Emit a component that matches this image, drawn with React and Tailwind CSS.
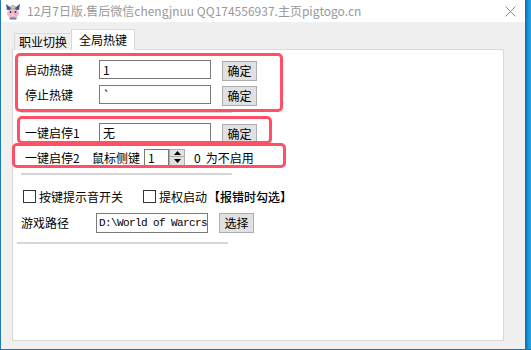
import React from "react";

const font = { fontFamily: '"Noto Sans CJK SC", "Noto Sans", sans-serif' };

function PigIcon() {
  return (
    <svg width="16" height="17" viewBox="0 0 16 17">
      <path d="M2 7 L1 1 L5 4 L8 2 L11 4 L15 1 L14 7 Z" fill="#3d5a8a" />
      <path d="M5 4 L8 2 L11 4 L10 6 L6 6 Z" fill="#9fb3d6" />
      <circle cx="8" cy="4" r="1.2" fill="#f4d35e" />
      <ellipse cx="8" cy="10.5" rx="6" ry="4.5" fill="#f6b9c4" />
      <circle cx="5.5" cy="9" r="0.9" fill="#333" />
      <circle cx="10.5" cy="9" r="0.9" fill="#333" />
      <ellipse cx="8" cy="11.8" rx="2.6" ry="1.7" fill="#fde5ea" stroke="#d98a99" strokeWidth="0.5" />
      <circle cx="7" cy="11.8" r="0.5" fill="#c06070" />
      <circle cx="9" cy="11.8" r="0.5" fill="#c06070" />
      <path d="M4 14.5 L12 14.5 L11 16.5 L5 16.5 Z" fill="#5b7fc0" />
    </svg>
  );
}

function Btn({ children, className = "" }) {
  return (
    <div
      className={
        "w-[35px] h-[20px] bg-[#e1e1e1] border border-[#adadad] flex items-center justify-center text-[12px] leading-none text-black " +
        className
      }
    >
      {children}
    </div>
  );
}

function Input({ children, className = "", h = "h-[19px]" }) {
  return (
    <div
      className={
        "w-[112px] " +
        h +
        " bg-white border border-[#7a7a7a] flex items-center pl-[3px] text-[12px] leading-none text-black overflow-hidden whitespace-nowrap " +
        className
      }
    >
      {children}
    </div>
  );
}

function Check() {
  return <div className="w-[13px] h-[13px] bg-white border border-[#333333] shrink-0" />;
}

export default function App() {
  return (
    <div
      className="w-[531px] h-[350px] flex flex-row bg-[#f0f0f0] border-b border-[#1e70a8] overflow-hidden"
      style={font}
    >
      <div className="w-[525px] h-full flex flex-col border-l border-[#1f7bb8]">
        {/* title bar */}
        <div className="h-[22px] bg-white flex items-center shrink-0">
          <div className="ml-[4px] mt-[1px]">
            <PigIcon />
          </div>
          <div className="ml-[6px] text-[12px] text-[#999999] whitespace-nowrap leading-none">
            12月7日版.售后微信chengjnuu QQ174556937.主页pigtogo.cn
          </div>
          <div className="ml-auto mr-[9px]">
            <svg width="11" height="11" viewBox="0 0 11 11">
              <path d="M0.5 0.5 L10.5 10.5 M10.5 0.5 L0.5 10.5" stroke="#8c8c8c" strokeWidth="1" />
            </svg>
          </div>
        </div>

        {/* tabs */}
        <div className="mt-[7px] flex flex-row items-end relative z-10 -mb-px">
          <div className="ml-[13px] w-[57px] h-[17px] border border-b-0 border-r-0 border-[#d9d9d9] bg-[#f0f0f0] flex items-center justify-center text-[12px] leading-none text-black">
            职业切换
          </div>
          <div className="w-[64px] h-[21px] border border-b-0 border-[#d9d9d9] bg-white flex items-center justify-center text-[12px] leading-none text-black">
            全局热键
          </div>
        </div>

        {/* panel */}
        <div className="ml-[11px] w-[492px] h-[292px] bg-white border border-[#d9d9d9] relative flex flex-col pt-[10px] text-[12px] text-black">
          {/* row 1 */}
          <div className="flex flex-row items-start h-[21px]">
            <div className="ml-[12px] w-[74px] leading-[19px]">启动热键</div>
            <Input>1</Input>
            <Btn className="ml-[11px] mt-[1px]">确定</Btn>
          </div>
          {/* row 2 */}
          <div className="mt-[4px] flex flex-row items-start h-[21px]">
            <div className="ml-[12px] w-[74px] leading-[19px]">停止热键</div>
            <Input>`</Input>
            <Btn className="ml-[11px] mt-[1px]">确定</Btn>
          </div>
          <div className="mt-[5px] ml-[8px] w-[211px] h-[2px] bg-[#d6d6d6]" />
          {/* row 3 */}
          <div className="mt-[10px] flex flex-row items-start h-[21px]">
            <div className="ml-[12px] w-[74px] leading-[19px]">一键启停1</div>
            <Input>无</Input>
            <Btn className="ml-[11px] mt-[1px]">确定</Btn>
          </div>
          {/* row 4 */}
          <div className="mt-[5px] flex flex-row items-center h-[17px]">
            <div className="ml-[12px] w-[67px] leading-none">一键启停2</div>
            <div className="w-[52px] leading-none">鼠标侧键</div>
            <div className="w-[25px] h-[17px] bg-white border border-[#7a7a7a] flex items-center pl-[3px] leading-none">
              1
            </div>
            <div className="w-[16px] h-[17px] flex flex-col">
              <div className="h-[8px] bg-[#e1e1e1] border border-[#adadad] flex items-center justify-center">
                <svg width="7" height="4" viewBox="0 0 7 4">
                  <path d="M3.5 0 L7 4 L0 4 Z" fill="#000" />
                </svg>
              </div>
              <div className="h-[9px] bg-[#e1e1e1] border border-t-0 border-[#adadad] flex items-center justify-center">
                <svg width="7" height="4" viewBox="0 0 7 4">
                  <path d="M0 0 L7 0 L3.5 4 Z" fill="#000" />
                </svg>
              </div>
            </div>
            <div className="ml-[9px] leading-none">0</div>
            <div className="ml-[5px] leading-none">为不启用</div>
          </div>
          <div className="mt-[7px] ml-[8px] w-[211px] h-[2px] bg-[#d6d6d6]" />
          {/* checkbox row */}
          <div className="mt-[15px] flex flex-row items-center h-[13px] whitespace-nowrap">
            <div className="ml-[10px]">
              <Check />
            </div>
            <div className="ml-[3px] leading-none">按键提示音开关</div>
            <div className="ml-[20px]">
              <Check />
            </div>
            <div className="ml-[3px] leading-none">提权启动</div>
            <div className="ml-[1px] leading-none font-medium">【报错时勾选】</div>
          </div>
          {/* path row */}
          <div className="mt-[10px] flex flex-row items-center h-[20px]">
            <div className="ml-[8px] w-[75px] leading-none">游戏路径</div>
            <div
              className="w-[112px] h-[20px] bg-white border border-[#7a7a7a] flex items-center pl-[2px] overflow-hidden whitespace-nowrap text-[11px] tracking-[-0.6px] leading-none text-black"
              style={{ fontFamily: '"Liberation Mono", monospace' }}
            >
              D:\World of Warcrs
            </div>
            <Btn className="ml-[11px]">选择</Btn>
          </div>
          <div className="mt-[9px] ml-[4px] w-[211px] h-[2px] bg-[#d6d6d6]" />

          {/* annotation rectangles */}
          <div className="absolute left-[2px] top-[3px] w-[268px] h-[59px] border-[3px] border-[#ff5066] rounded-[5px] pointer-events-none" />
          <div className="absolute left-[4px] top-[66px] w-[255px] h-[28px] border-[3px] border-[#ff5066] rounded-[5px] pointer-events-none" />
          <div className="absolute left-[-1px] top-[93px] w-[274px] h-[25px] border-[3px] border-[#ff5066] rounded-[5px] pointer-events-none" />
        </div>
      </div>
      <div className="w-[6px] h-full bg-gradient-to-r from-[#0f6aa8] via-[#1492dc] to-[#2aa5e6]" />
    </div>
  );
}
